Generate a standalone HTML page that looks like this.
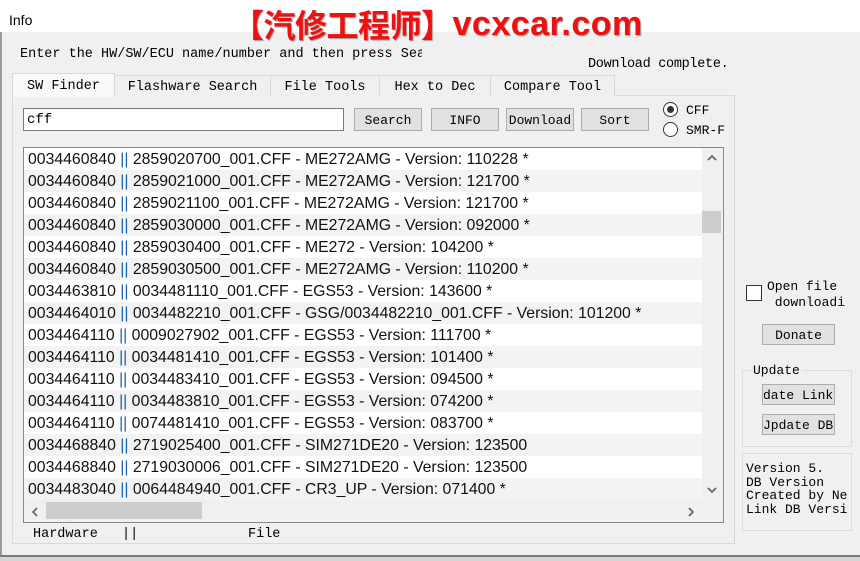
<!DOCTYPE html>
<html><head><meta charset="utf-8"><style>
*{margin:0;padding:0;box-sizing:border-box}
body{width:860px;height:561px;overflow:hidden;background:#f0f0f0;position:relative;font-family:"Liberation Mono","DejaVu Sans Mono",monospace;font-size:13px;color:#000}
.a{position:absolute}
.btn{position:absolute;background:#e1e1e1;border:1px solid #adadad;text-align:center;font-size:13px;line-height:23px;white-space:nowrap;overflow:hidden}
.tab{position:absolute;top:75px;height:21px;border:1px solid #d9d9d9;border-bottom:none;background:#f0f0f0;line-height:20px;text-align:center;font-size:13.5px}
.row{height:22px;line-height:24px;padding-left:4px;font-family:"Liberation Sans",sans-serif;font-size:15.8px;white-space:nowrap;color:#111}
.row:nth-child(even){background:#f3f3f3}
.row b{font-weight:normal;color:#1a5fb4}
</style></head><body>
<div class="a" style="left:0;top:0;width:860px;height:32px;background:#fff"></div>
<div class="a" style="left:9px;top:12px;font-family:'Liberation Sans',sans-serif;font-size:14px">Info</div>
<div class="a" style="left:232px;top:1px;font-family:'Liberation Sans','Noto Sans CJK SC',sans-serif;font-weight:bold;font-size:32px;color:#f01010;text-shadow:1px 1px 1px #999;letter-spacing:-0.5px;white-space:nowrap">【汽修工程师】<span style="font-size:34px;letter-spacing:0.5px;position:relative;top:-2px">vcxcar.com</span></div>
<div class="a" style="left:0;top:32px;width:2px;height:525px;background:#9a9a9a"></div>
<div class="a" style="left:0;top:555px;width:860px;height:2px;background:#7a7a7a"></div>
<div class="a" style="left:0;top:557px;width:860px;height:4px;background:#d6d6d6"></div>
<div class="a" style="left:20px;top:47px;font-size:13.5px;white-space:nowrap;width:402px;overflow:hidden">Enter the HW/SW/ECU name/number and then press Search</div>
<div class="a" style="left:588px;top:57px;font-size:13.5px;letter-spacing:-0.3px">Download complete.</div>
<!-- panel -->
<div class="a" style="left:12px;top:95px;width:723px;height:449px;border:1px solid #d9d9d9;background:#f0f0f0"></div>
<div class="tab" style="left:12px;top:73px;height:24px;width:103px;background:#f9f9f9;border-color:#d9d9d9;z-index:2;line-height:25px">SW Finder</div>
<div class="tab" style="left:114px;width:157px;line-height:23px">Flashware Search</div>
<div class="tab" style="left:270px;width:110px;line-height:23px">File Tools</div>
<div class="tab" style="left:379px;width:112px;line-height:23px">Hex to Dec</div>
<div class="tab" style="left:490px;width:125px;line-height:23px">Compare Tool</div>
<div class="a" style="left:23px;top:108px;width:321px;height:23px;border:1px solid #7a7a7a;background:#fff;font-size:14px;line-height:23px;padding-left:3px">cff</div>
<div class="btn" style="left:354px;top:108px;width:68px;height:23px">Search</div>
<div class="btn" style="left:431px;top:108px;width:68px;height:23px">INFO</div>
<div class="btn" style="left:506px;top:108px;width:68px;height:23px">Download</div>
<div class="btn" style="left:581px;top:108px;width:68px;height:23px">Sort</div>
<div class="a" style="left:663px;top:102px;width:15px;height:15px;border:1px solid #333;border-radius:50%;background:#fff"><div style="margin:3px;width:7px;height:7px;border-radius:50%;background:#333"></div></div>
<div class="a" style="left:686px;top:103px">CFF</div>
<div class="a" style="left:663px;top:122px;width:15px;height:15px;border:1px solid #333;border-radius:50%;background:#fff"></div>
<div class="a" style="left:686px;top:123px">SMR-F</div>
<!-- list -->
<div class="a" style="left:23px;top:147px;width:701px;height:376px;border:1px solid #828790;background:#fff;overflow:hidden">
<div style="width:678px;height:352px;overflow:hidden">
<div class="row">0034460840 <b>||</b> 2859020700_001.CFF - ME272AMG - Version: 110228 *</div>
<div class="row">0034460840 <b>||</b> 2859021000_001.CFF - ME272AMG - Version: 121700 *</div>
<div class="row">0034460840 <b>||</b> 2859021100_001.CFF - ME272AMG - Version: 121700 *</div>
<div class="row">0034460840 <b>||</b> 2859030000_001.CFF - ME272AMG - Version: 092000 *</div>
<div class="row">0034460840 <b>||</b> 2859030400_001.CFF - ME272 - Version: 104200 *</div>
<div class="row">0034460840 <b>||</b> 2859030500_001.CFF - ME272AMG - Version: 110200 *</div>
<div class="row">0034463810 <b>||</b> 0034481110_001.CFF - EGS53 - Version: 143600 *</div>
<div class="row">0034464010 <b>||</b> 0034482210_001.CFF - GSG/0034482210_001.CFF - Version: 101200 *</div>
<div class="row">0034464110 <b>||</b> 0009027902_001.CFF - EGS53 - Version: 111700 *</div>
<div class="row">0034464110 <b>||</b> 0034481410_001.CFF - EGS53 - Version: 101400 *</div>
<div class="row">0034464110 <b>||</b> 0034483410_001.CFF - EGS53 - Version: 094500 *</div>
<div class="row">0034464110 <b>||</b> 0034483810_001.CFF - EGS53 - Version: 074200 *</div>
<div class="row">0034464110 <b>||</b> 0074481410_001.CFF - EGS53 - Version: 083700 *</div>
<div class="row">0034468840 <b>||</b> 2719025400_001.CFF - SIM271DE20 - Version: 123500</div>
<div class="row">0034468840 <b>||</b> 2719030006_001.CFF - SIM271DE20 - Version: 123500</div>
<div class="row">0034483040 <b>||</b> 0064484940_001.CFF - CR3_UP - Version: 071400 *</div>
</div>
<div class="a" style="left:678px;top:0;width:21px;height:352px;background:#f0f0f0"></div>
<div class="a" style="left:678px;top:63px;width:19px;height:22px;background:#cdcdcd"></div>
<svg class="a" style="left:682px;top:6px" width="12" height="8"><path d="M2 6 L6 2 L10 6" stroke="#606060" stroke-width="1.6" fill="none"/></svg>
<svg class="a" style="left:682px;top:338px" width="12" height="8"><path d="M2 2 L6 6 L10 2" stroke="#606060" stroke-width="1.6" fill="none"/></svg>
<div class="a" style="left:0;top:352px;width:699px;height:22px;background:#f0f0f0"></div>
<div class="a" style="left:22px;top:354px;width:156px;height:17px;background:#cdcdcd"></div>
<svg class="a" style="left:7px;top:358px" width="8" height="12"><path d="M6 2 L2 6 L6 10" stroke="#606060" stroke-width="1.6" fill="none"/></svg>
<svg class="a" style="left:663px;top:358px" width="8" height="12"><path d="M2 2 L6 6 L2 10" stroke="#606060" stroke-width="1.6" fill="none"/></svg>
</div>
<div class="a" style="left:33px;top:527px;font-size:13.5px">Hardware</div>
<div class="a" style="left:122px;top:527px;font-size:13.5px">||</div>
<div class="a" style="left:248px;top:527px;font-size:13.5px">File</div>
<!-- right -->
<div class="a" style="left:746px;top:285px;width:16px;height:16px;border:1px solid #333;background:#fff"></div>
<div class="a" style="left:767px;top:279px;line-height:16px">Open file<br>&nbsp;downloadi</div>
<div class="btn" style="left:762px;top:324px;width:73px;height:21px;line-height:21px">Donate</div>
<div class="a" style="left:742px;top:370px;width:110px;height:77px;border:1px solid #dcdcdc"></div>
<div class="a" style="left:751px;top:363px;background:#f0f0f0;padding:0 2px">Update</div>
<div class="btn" style="left:762px;top:384px;width:73px;height:21px;line-height:21px;text-align:left">date Link</div>
<div class="btn" style="left:762px;top:414px;width:73px;height:21px;line-height:21px;text-align:left">Jpdate DB</div>
<div class="a" style="left:742px;top:453px;width:110px;height:78px;border:1px solid #dcdcdc"></div>
<div class="a" style="left:746px;top:462px;line-height:13.5px;font-size:13px;white-space:pre;width:103px;overflow:hidden">Version 5.
DB Version
Created by Ne
Link DB Versi</div>
</body></html>
